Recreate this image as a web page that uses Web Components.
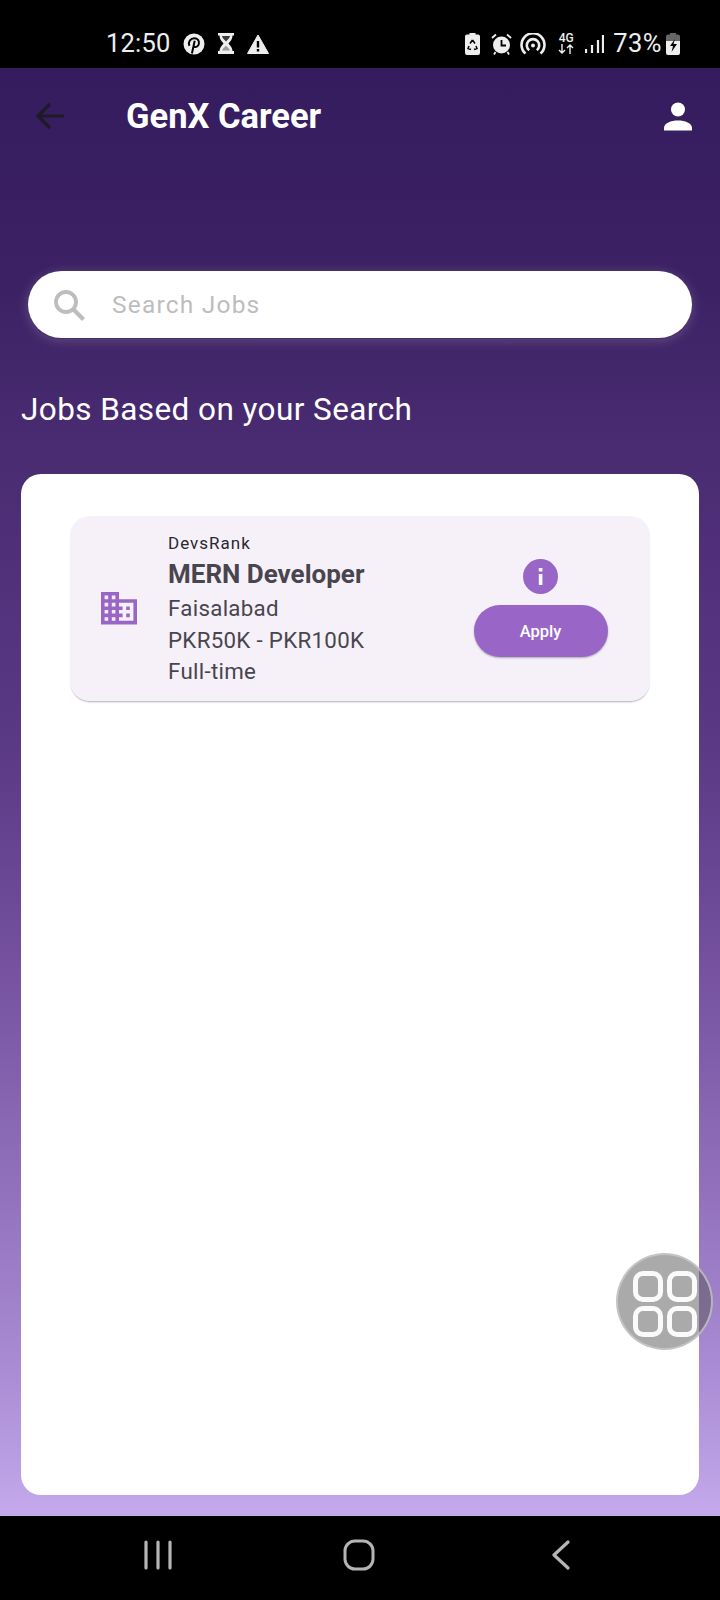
<!DOCTYPE html>
<html><head><meta charset="utf-8"><style>
html,body{margin:0;padding:0;background:#000}
body{width:720px;height:1600px;font-family:Roboto,"Liberation Sans",sans-serif;overflow:hidden}
</style></head><body>
<app-screen></app-screen>
<script>
function el(name, html){
  customElements.define(name, class extends HTMLElement{
    constructor(){super();this.attachShadow({mode:'open'}).innerHTML=html;}
  });
}
el('status-bar',`<style>
:host{display:flex;height:68px;background:#000;color:#eee;align-items:flex-start;justify-content:space-between;padding:30px 40px 0 106px;box-sizing:border-box;flex:none}
.g{display:flex;align-items:center;height:27px}
span{font-size:25.500px;line-height:27px;letter-spacing:.2px}
svg{display:block;flex:none}
</style>
<div class="g"><span>12:50</span>
<svg style="margin-left:12px" width="22" height="22" viewBox="0 0 22 22"><circle cx="11" cy="11" r="10.500" fill="#eee"/><path d="M6.300 12.800C4.800 8.500 7.800 5.200 11.200 5.200c3.500 0 5.200 2.600 4.700 5.400-.5 3-3.400 4.200-5.200 2.800" fill="none" stroke="#000" stroke-width="2"/><path d="M11.700 7.800 8.900 20.500" fill="none" stroke="#000" stroke-width="2"/></svg>
<svg style="margin-left:13px" width="16" height="21" viewBox="0 0 16 21"><path d="M0 0h16v2.500h-1.500c0 3.500-2 5.500-4 8 2 2.500 4 4.500 4 7.500H16v3H0v-3h1.500c0-3 2-5 4-7.500-2-2.500-4-4.500-4-8H0z" fill="#eee"/><path d="M4 3h8c-.3 2-2 3.500-4 5.500C6 6.500 4.300 5 4 3z" fill="#000" opacity=".75"/><path d="M4 17.500c.4-1.600 2-3 4-4.800 2 1.800 3.600 3.200 4 4.800z" fill="#000" opacity=".35"/></svg>
<svg style="margin-left:13px" width="22" height="20" viewBox="0 0 22 20"><path d="M11 1 21.500 19.500H.5z" fill="#eee" stroke="#eee" stroke-linejoin="round"/><path d="M9.800 7h2.400v6.500H9.800zM9.800 15h2.400v2.400H9.800z" fill="#000"/></svg>
</div>
<div class="g">
<svg width="15" height="22" viewBox="0 0 15 22"><path d="M4.500 0h6v1.500H13a2 2 0 0 1 2 2V20a2 2 0 0 1-2 2H2a2 2 0 0 1-2-2V3.500a2 2 0 0 1 2-2h2.500z" fill="#eee"/><path d="M7.500 7 10 10.500M7.500 7 5 10.500M4 13l-1 2.500 3 1M11 13l1 2.500-3 1" fill="none" stroke="#000" stroke-width="1.500"/></svg>
<svg style="margin-left:11px" width="21" height="22" viewBox="0 0 21 22"><circle cx="10.500" cy="12" r="8.500" fill="#eee"/><path d="M10.500 7v5.500h4.500" fill="none" stroke="#000" stroke-width="1.800"/><path d="M1 5 5 1.500M20 5 16 1.500M4.500 19 3 21.500M16.500 19 18 21.500" stroke="#eee" stroke-width="1.800" fill="none"/></svg>
<svg style="margin-left:8px" width="26" height="22" viewBox="0 0 26 22"><g fill="none" stroke="#eee" stroke-width="2.600"><path d="M5.500 20.500A11.500 11.500 0 1 1 20.500 20.500"/><path d="M9.200 17.200A6.200 6.200 0 1 1 16.800 17.200"/></g><circle cx="13" cy="12.500" r="2" fill="#eee"/></svg>
<div style="margin-left:12px;width:16px;display:flex;flex-direction:column;align-items:center;font-size:12px;line-height:11px;font-weight:500;color:#eee">4G<svg style="margin-top:0" width="16" height="10" viewBox="0 0 16 10"><path d="M4 0v9M1 6l3 3 3-3M12 10V1M9 4l3-3 3 3" fill="none" stroke="#eee" stroke-width="1.400"/></svg></div>
<svg style="margin-left:11px" width="19" height="20" viewBox="0 0 19 20"><path d="M1 15v4M7 11v8M13 6v13M18 1v18" stroke="#eee" stroke-width="2.200" fill="none"/></svg>
<span style="margin-left:9px;letter-spacing:.5px">73%</span>
<svg style="margin-left:4px" width="14" height="22" viewBox="0 0 14 22"><path d="M4 0h6v1.500h2a2 2 0 0 1 2 2V8H0V3.500a2 2 0 0 1 2-2h2z" fill="#666"/><path d="M0 8h14v12a2 2 0 0 1-2 2H2a2 2 0 0 1-2-2z" fill="#eee"/><path d="M9 6 4 13h3l-1.500 6L11 11H7.500z" fill="#000"/></svg>
</div>`);

el('app-bar',`<style>
:host{display:flex;align-items:center;height:94px;flex:none;color:#fff;padding:2px 28px 0 35px;box-sizing:border-box}
h1{margin:0 0 0 61px;font:700 34.500px/40px Roboto,sans-serif;flex:1}
svg{display:block}
</style>
<svg width="30" height="28" viewBox="0 0 30 28"><path d="M29 14H3M15 2 3 14l12 12" fill="none" stroke="#1f1a26" stroke-width="3.200"/></svg>
<h1>GenX Career</h1>
<svg width="28" height="29" viewBox="0 0 28 29"><circle cx="14" cy="7.500" r="7" fill="#fff"/><path d="M0 28.500V26C0 21 7 18.500 14 18.500S28 21 28 26v2.500z" fill="#fff"/></svg>`);

el('search-box',`<style>
:host{display:flex;align-items:center;height:67px;margin:109px 28px 0 28px;background:#fff;border-radius:33.500px;box-shadow:0 1px 1px rgba(60,40,90,.6),0 2px 12px rgba(255,255,255,.2);flex:none;padding-left:25px;box-sizing:border-box}
svg{display:block;flex:none}
span{margin-left:27px;font-size:24.500px;color:#bdbdbd;letter-spacing:1.200px}
</style>
<svg width="32" height="32" viewBox="0 0 32 32"><circle cx="13" cy="13" r="10" fill="none" stroke="#bdbdbd" stroke-width="3.800"/><path d="m20 20 10.500 10.500" stroke="#bdbdbd" stroke-width="4.200"/></svg>
<span><slot></slot></span>`);

el('section-title',`<style>
:host{display:block;margin:52px 0 0 21px;font-size:31.500px;line-height:40px;color:#fff;letter-spacing:.42px;flex:none}
</style><slot></slot>`);

el('white-panel',`<style>
:host{display:block;margin:44px 21px 21px 21px;background:#fff;border-radius:20px;flex:1;padding:42px 49px;box-sizing:border-box}
</style><slot></slot>`);

el('job-card',`<style>
:host{display:flex;align-items:center;height:185px;background:#f6f1f9;border-radius:20px;box-shadow:0 2px 2px -1px rgba(0,0,0,.32);box-sizing:border-box;padding-left:31px;color:#49454f}
.icon{display:block;flex:none}
.info{margin-left:31px;flex:1;display:flex;flex-direction:column;padding-top:2px}
.co{font-size:17px;line-height:24px;letter-spacing:1px;color:#2a2730}
.ti{font-size:26px;line-height:36px;font-weight:700;padding-top:1px;margin-bottom:1px}
.ln{font-size:22.300px;line-height:31.500px;letter-spacing:.3px}
.act{width:134px;margin-right:42.500px;display:flex;flex-direction:column;align-items:center;gap:11px;padding-bottom:1px}
.act svg{display:block}
.btn{width:134px;height:52px;border-radius:26px;background:#9966c8;box-shadow:0 1px 2px rgba(0,0,0,.3);color:#fff;font-size:16.500px;font-weight:500;display:flex;align-items:center;justify-content:center}
</style>
<svg class="icon" width="36" height="32.400" viewBox="2 3 20 18"><path fill="#9966c8" d="M12 7V3H2v18h20V7H12zM6 19H4v-2h2v2zm0-4H4v-2h2v2zm0-4H4V9h2v2zm0-4H4V5h2v2zm4 12H8v-2h2v2zm0-4H8v-2h2v2zm0-4H8V9h2v2zm0-4H8V5h2v2zm10 12h-8v-2h2v-2h-2v-2h2v-2h-2V9h8v10zm-2-8h-2v2h2v-2zm0 4h-2v2h2v-2z"/></svg>
<div class="info"><div class="co">DevsRank</div><div class="ti">MERN Developer</div><div class="ln">Faisalabad</div><div class="ln">PKR50K - PKR100K</div><div class="ln">Full-time</div></div>
<div class="act"><svg width="35" height="35" viewBox="0 0 35 35"><circle cx="17.500" cy="17.500" r="17.500" fill="#9966c8"/><path d="M15.800 9h3.600v3.500h-3.600zM15.800 15h3.600v11h-3.600z" fill="#fff"/></svg><div class="btn">Apply</div></div>`);

el('nav-bar',`<style>
:host{display:block;height:84px;background:#000;flex:none}
.c{display:grid;grid-template-columns:200px 209px 18px;align-items:start;padding:24px 0 0 143px;box-sizing:border-box}
svg{display:block}
</style>
<div class="c">
<svg width="30" height="30" viewBox="0 0 30 30"><path d="M3 2v26M15 2v26M27 2v26" stroke="#b5b5b5" stroke-width="3.200" stroke-linecap="round"/></svg>
<svg style="margin-top:-1px" width="32" height="32" viewBox="0 0 32 32"><rect x="2" y="2" width="28" height="28" rx="10" fill="none" stroke="#b5b5b5" stroke-width="3"/></svg>
<svg width="18" height="30" viewBox="0 0 18 30"><path d="M16 2 2 15l14 13" fill="none" stroke="#b5b5b5" stroke-width="3.200" stroke-linecap="round" stroke-linejoin="round"/></svg>
</div>`);

el('float-menu',`<style>
:host{position:absolute;left:616px;top:1253px;width:97px;height:97px;padding-top:4px;border-radius:50%;background:rgba(85,85,85,.5);border:2px solid rgba(205,205,205,.75);box-sizing:border-box;display:grid;grid-template-columns:30px 30px;grid-template-rows:31px 31px;gap:4px;justify-content:center;align-content:center}
div{border:5px solid #fafafa;border-radius:10px;box-sizing:border-box}
</style><div></div><div></div><div></div><div></div>`);

el('app-screen',`<style>
:host{display:flex;flex-direction:column;width:720px;height:1600px;position:relative}
.bg{flex:1;display:flex;flex-direction:column;min-height:0;background:linear-gradient(180deg,#351c5e 0%,#3c2264 15%,#4a2c72 27%,#5a3985 47%,#75519f 62%,#9272bd 78%,#a98cd3 90%,#c4a9ec 100%)}
</style>
<status-bar></status-bar>
<div class="bg">
<app-bar></app-bar>
<search-box>Search Jobs</search-box>
<section-title>Jobs Based on your Search</section-title>
<white-panel><job-card></job-card></white-panel>
</div>
<nav-bar></nav-bar>
<float-menu></float-menu>`);
</script>
</body></html>
